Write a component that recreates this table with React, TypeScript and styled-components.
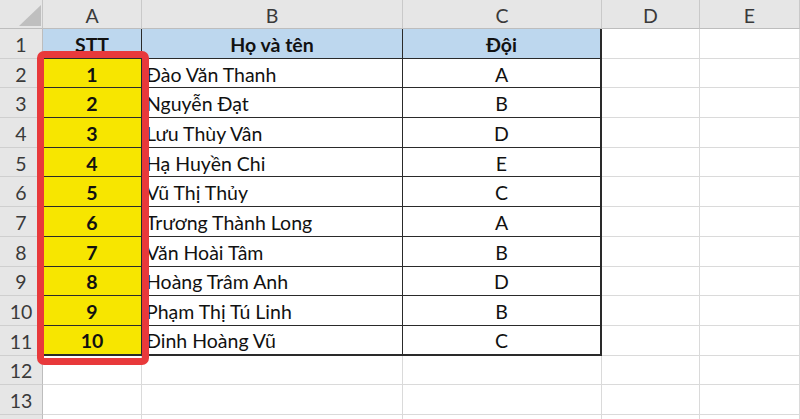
import React from "react";
import styled, { createGlobalStyle, css } from "styled-components";

const Global = createGlobalStyle`
  html, body { margin: 0; padding: 0; background: #ffffff; overflow: hidden; }
  body { font-family: "Lato", "Liberation Sans", sans-serif; }
  * { box-sizing: border-box; }
`;

const Wrap = styled.div`
  position: relative;
  width: 800px;
  height: 419px;
  overflow: hidden;
`;

const Sheet = styled.div`
  display: grid;
  grid-template-columns: 43px 99px 261px 199px 98px 100px;
  grid-template-rows: 29px repeat(14, 29.7px);
  font-size: 19.5px;
  color: #111;
`;

const Corner = styled.div`
  background: #e6e6e6;
  border-right: 1px solid #c6c6c6;
  border-bottom: 1px solid #bdbdbd;
  svg { display: block; }
`;

const ColHead = styled.div`
  background: #e6e6e6;
  border-right: 1px solid #c9c9c9;
  border-bottom: 1px solid #bdbdbd;
  color: #3a3a3a;
  display: flex;
  align-items: center;
  justify-content: center;
  padding-top: 2px;
`;

const RowHead = styled.div`
  background: #e6e6e6;
  border-right: 1px solid #bdbdbd;
  border-bottom: 1px solid #cfcfcf;
  color: #3a3a3a;
  display: flex;
  align-items: center;
  justify-content: center;
  padding-top: 2px;
`;

type CellProps = {
  $bg?: string;
  $align?: "left" | "center";
  $bold?: boolean;
  $table?: boolean;
  $thickRight?: boolean;
  $thickBottom?: boolean;
};

const Cell = styled.div<CellProps>`
  background: ${(p) => p.$bg || "#ffffff"};
  border-right: 1px solid #dadada;
  border-bottom: 1px solid #dadada;
  display: flex;
  align-items: center;
  justify-content: ${(p) => (p.$align === "left" ? "flex-start" : "center")};
  padding: 2px 4px 0 4px;
  font-weight: ${(p) => (p.$bold ? 700 : 400)};
  white-space: nowrap;
  overflow: hidden;
  ${(p) =>
    p.$table &&
    css`
      border-right: ${p.$thickRight ? "2px" : "1px"} solid #2a2a2a;
      border-bottom: ${p.$thickBottom ? "2px" : "1px"} solid #2a2a2a;
    `}
`;

const Selection = styled.div`
  position: absolute;
  left: 37px;
  top: 51px;
  width: 112px;
  height: 314px;
  border: 7px solid #e8393b;
  border-radius: 7px;
  pointer-events: none;
`;

const rows: [number, string, string][] = [
  [1, "Đào Văn Thanh", "A"],
  [2, "Nguyễn Đạt", "B"],
  [3, "Lưu Thùy Vân", "D"],
  [4, "Hạ Huyền Chi", "E"],
  [5, "Vũ Thị Thủy", "C"],
  [6, "Trương Thành Long", "A"],
  [7, "Văn Hoài Tâm", "B"],
  [8, "Hoàng Trâm Anh", "D"],
  [9, "Phạm Thị Tú Linh", "B"],
  [10, "Đinh Hoàng Vũ", "C"],
];

const cols = ["A", "B", "C", "D", "E"];

export default function App() {
  return (
    <Wrap>
      <Global />
      <Sheet>
        <Corner>
          <svg width="43" height="29" viewBox="0 0 43 29">
            <polygon points="41,5 41,26 19,26" fill="#bfbfbf" />
          </svg>
        </Corner>
        {cols.map((c) => (
          <ColHead key={c}>{c}</ColHead>
        ))}

        <RowHead>1</RowHead>
        <Cell $bg="#bdd7ee" $bold $table>STT</Cell>
        <Cell $bg="#bdd7ee" $bold $table>Họ và tên</Cell>
        <Cell $bg="#bdd7ee" $bold $table $thickRight>Đội</Cell>
        <Cell />
        <Cell />

        {rows.map(([n, name, team], i) => {
          const last = i === rows.length - 1;
          return (
            <React.Fragment key={n}>
              <RowHead>{i + 2}</RowHead>
              <Cell $bg="#f7e600" $bold $table $thickBottom={last}>{n}</Cell>
              <Cell $align="left" $table $thickBottom={last}>{name}</Cell>
              <Cell $table $thickRight $thickBottom={last}>{team}</Cell>
              <Cell />
              <Cell />
            </React.Fragment>
          );
        })}

        {[12, 13].map((r) => (
          <React.Fragment key={r}>
            <RowHead>{r}</RowHead>
            {cols.map((c) => (
              <Cell key={c} />
            ))}
          </React.Fragment>
        ))}
        <RowHead />
        {cols.map((c) => (
          <Cell key={c} />
        ))}
      </Sheet>
      <Selection />
    </Wrap>
  );
}
